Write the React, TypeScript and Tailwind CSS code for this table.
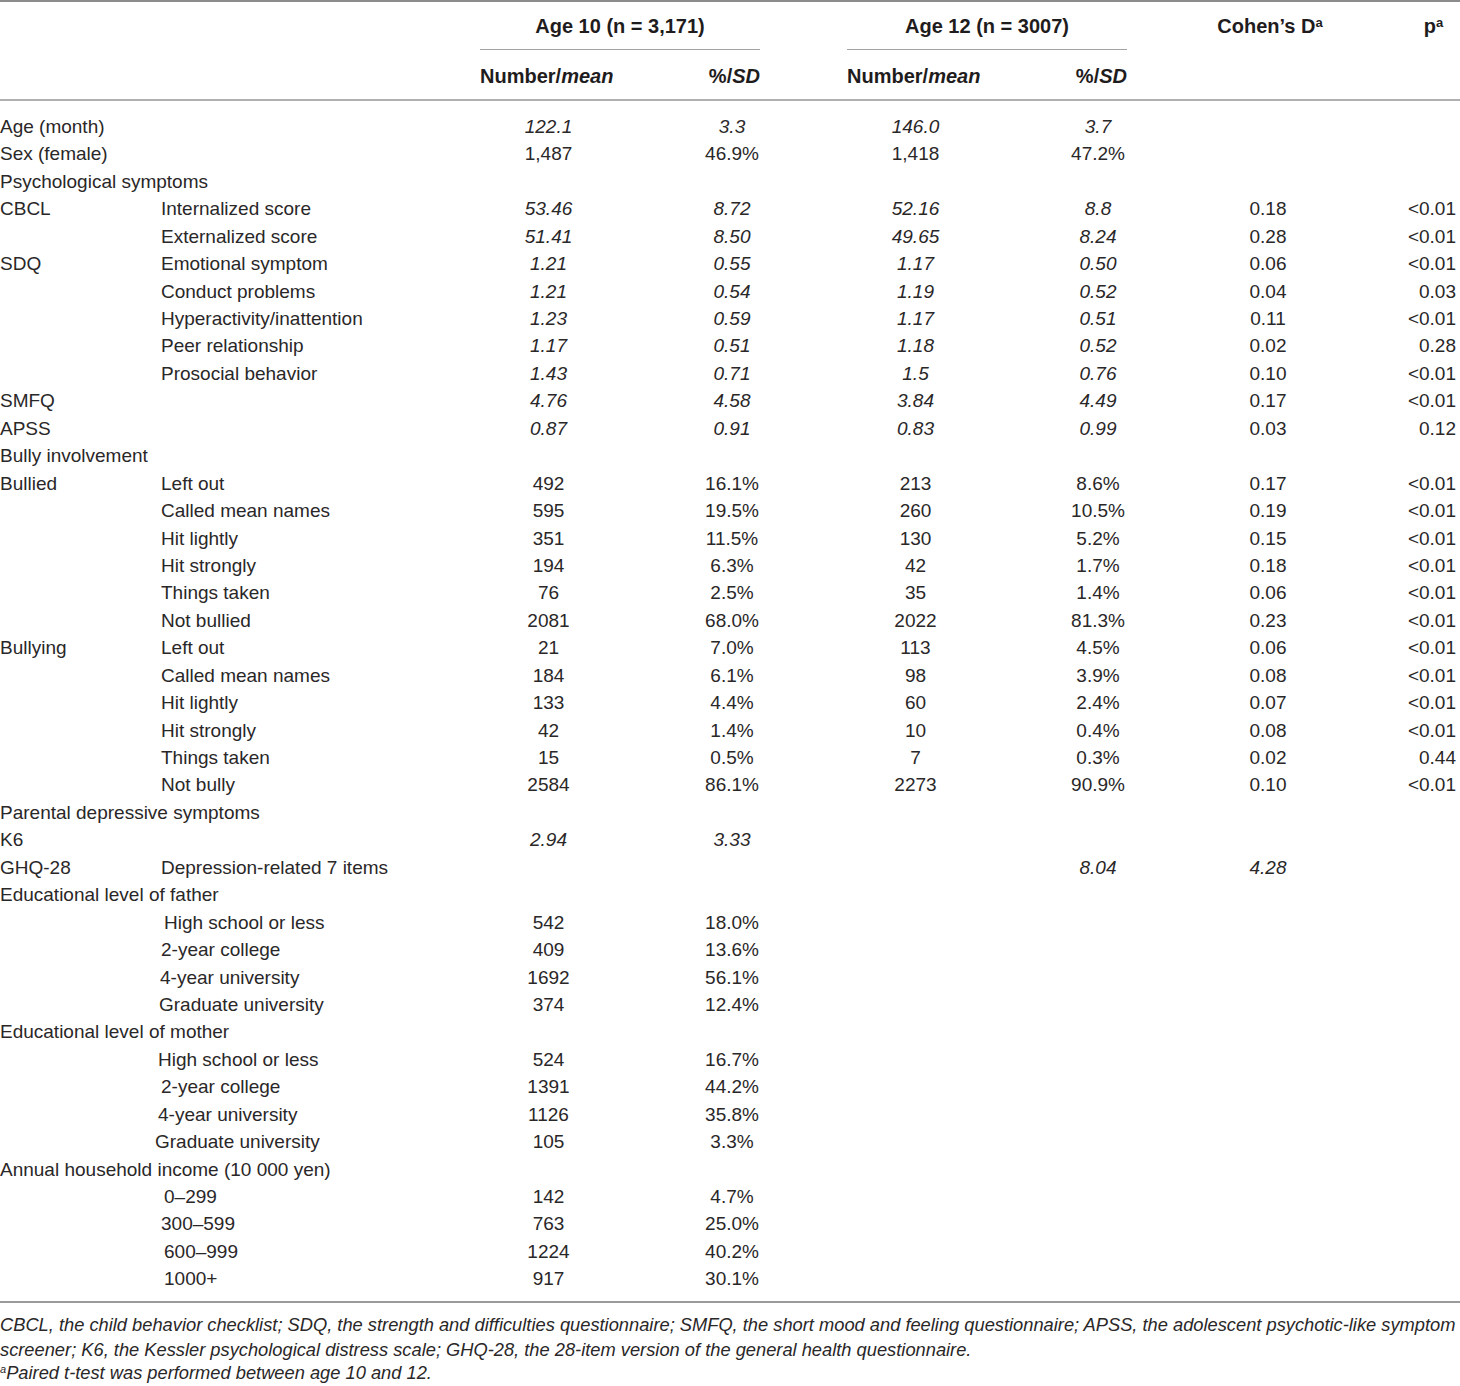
import { Fragment } from "react";

type Row = {
  a?: string;
  b?: string;
  bClass?: string;
  n10?: string;
  sd10?: string;
  n12?: string;
  sd12?: string;
  d?: string;
  p?: string;
  it?: boolean;
};

const rows: Row[] = [
  { a: "Age (month)", n10: "122.1", sd10: "3.3", n12: "146.0", sd12: "3.7", it: true },
  { a: "Sex (female)", n10: "1,487", sd10: "46.9%", n12: "1,418", sd12: "47.2%" },
  { a: "Psychological symptoms" },
  { a: "CBCL", b: "Internalized score", n10: "53.46", sd10: "8.72", n12: "52.16", sd12: "8.8", d: "0.18", p: "<0.01", it: true },
  { b: "Externalized score", n10: "51.41", sd10: "8.50", n12: "49.65", sd12: "8.24", d: "0.28", p: "<0.01", it: true },
  { a: "SDQ", b: "Emotional symptom", n10: "1.21", sd10: "0.55", n12: "1.17", sd12: "0.50", d: "0.06", p: "<0.01", it: true },
  { b: "Conduct problems", n10: "1.21", sd10: "0.54", n12: "1.19", sd12: "0.52", d: "0.04", p: "0.03", it: true },
  { b: "Hyperactivity/inattention", n10: "1.23", sd10: "0.59", n12: "1.17", sd12: "0.51", d: "0.11", p: "<0.01", it: true },
  { b: "Peer relationship", n10: "1.17", sd10: "0.51", n12: "1.18", sd12: "0.52", d: "0.02", p: "0.28", it: true },
  { b: "Prosocial behavior", n10: "1.43", sd10: "0.71", n12: "1.5", sd12: "0.76", d: "0.10", p: "<0.01", it: true },
  { a: "SMFQ", n10: "4.76", sd10: "4.58", n12: "3.84", sd12: "4.49", d: "0.17", p: "<0.01", it: true },
  { a: "APSS", n10: "0.87", sd10: "0.91", n12: "0.83", sd12: "0.99", d: "0.03", p: "0.12", it: true },
  { a: "Bully involvement" },
  { a: "Bullied", b: "Left out", n10: "492", sd10: "16.1%", n12: "213", sd12: "8.6%", d: "0.17", p: "<0.01" },
  { b: "Called mean names", n10: "595", sd10: "19.5%", n12: "260", sd12: "10.5%", d: "0.19", p: "<0.01" },
  { b: "Hit lightly", n10: "351", sd10: "11.5%", n12: "130", sd12: "5.2%", d: "0.15", p: "<0.01" },
  { b: "Hit strongly", n10: "194", sd10: "6.3%", n12: "42", sd12: "1.7%", d: "0.18", p: "<0.01" },
  { b: "Things taken", n10: "76", sd10: "2.5%", n12: "35", sd12: "1.4%", d: "0.06", p: "<0.01" },
  { b: "Not bullied", n10: "2081", sd10: "68.0%", n12: "2022", sd12: "81.3%", d: "0.23", p: "<0.01" },
  { a: "Bullying", b: "Left out", n10: "21", sd10: "7.0%", n12: "113", sd12: "4.5%", d: "0.06", p: "<0.01" },
  { b: "Called mean names", n10: "184", sd10: "6.1%", n12: "98", sd12: "3.9%", d: "0.08", p: "<0.01" },
  { b: "Hit lightly", n10: "133", sd10: "4.4%", n12: "60", sd12: "2.4%", d: "0.07", p: "<0.01" },
  { b: "Hit strongly", n10: "42", sd10: "1.4%", n12: "10", sd12: "0.4%", d: "0.08", p: "<0.01" },
  { b: "Things taken", n10: "15", sd10: "0.5%", n12: "7", sd12: "0.3%", d: "0.02", p: "0.44" },
  { b: "Not bully", n10: "2584", sd10: "86.1%", n12: "2273", sd12: "90.9%", d: "0.10", p: "<0.01" },
  { a: "Parental depressive symptoms" },
  { a: "K6", n10: "2.94", sd10: "3.33", it: true },
  // values sit one column to the right in the source table
  { a: "GHQ-28", b: "Depression-related 7 items", sd12: "8.04", d: "4.28", it: true },
  { a: "Educational level of father" },
  { b: "High school or less", bClass: "ml-[3px]", n10: "542", sd10: "18.0%" },
  { b: "2-year college", n10: "409", sd10: "13.6%" },
  { b: "4-year university", bClass: "-ml-[1px]", n10: "1692", sd10: "56.1%" },
  { b: "Graduate university", bClass: "-ml-[2px]", n10: "374", sd10: "12.4%" },
  { a: "Educational level of mother" },
  { b: "High school or less", bClass: "-ml-[3px]", n10: "524", sd10: "16.7%" },
  { b: "2-year college", n10: "1391", sd10: "44.2%" },
  { b: "4-year university", bClass: "-ml-[3px]", n10: "1126", sd10: "35.8%" },
  { b: "Graduate university", bClass: "-ml-[6px]", n10: "105", sd10: "3.3%" },
  { a: "Annual household income (10 000 yen)" },
  { b: "0–299", bClass: "ml-[3px]", n10: "142", sd10: "4.7%" },
  { b: "300–599", n10: "763", sd10: "25.0%" },
  { b: "600–999", bClass: "ml-[3px]", n10: "1224", sd10: "40.2%" },
  { b: "1000+", bClass: "ml-[3px]", n10: "917", sd10: "30.1%" },
];

const Sup = ({ children }: { children: string }) => (
  <sup className="relative -top-[3px] text-[13px] font-bold">{children}</sup>
);

export default function App() {
  return (
    <div className="w-[1460px] bg-white font-['Liberation_Sans',Arial,sans-serif] text-[#2a2728]">
      <div className="border-t-2 border-[#8c8c8c]" />

      {/* header */}
      <div className="grid grid-cols-[480px_280px_87px_280px_286px_1fr] text-[20px] font-bold leading-none text-[#1f1c1d]">
        <div className="h-[48px]" />
        <div className="flex h-[48px] items-center justify-center border-b border-[#a3a3a3]">
          Age 10 (n = 3,171)
        </div>
        <div />
        <div className="flex h-[48px] items-center justify-center border-b border-[#a3a3a3]">
          Age 12 (n = 3007)
        </div>
        <div className="flex h-[48px] items-center justify-center">
          Cohen’s D<Sup>a</Sup>
        </div>
        <div className="flex h-[48px] items-center justify-center pr-[6px]">
          p<Sup>a</Sup>
        </div>

        <div className="h-[49px]" />
        <div className="flex h-[49px] items-center justify-between pt-[2px]">
          <span>
            Number/<i>mean</i>
          </span>
          <span>
            %/<i>SD</i>
          </span>
        </div>
        <div />
        <div className="flex h-[49px] items-center justify-between pt-[2px]">
          <span>
            Number/<i>mean</i>
          </span>
          <span>
            %/<i>SD</i>
          </span>
        </div>
        <div />
        <div />
      </div>
      <div className="border-t-2 border-[#b0b0b0]" />

      {/* body */}
      <div className="grid grid-cols-[161px_319px_137px_230px_137px_228px_112px_1fr] pt-[12.5px] pb-[7.5px] text-[19px]">
        {rows.map((r, i) => {
          const num = r.it ? "italic" : "";
          return (
            <Fragment key={i}>
              <div className="flex h-[27.45px] items-center whitespace-nowrap">{r.a}</div>
              <div className="flex h-[27.45px] items-center whitespace-nowrap">
                <span className={r.bClass}>{r.b}</span>
              </div>
              <div className={`flex h-[27.45px] items-center justify-center ${num}`}>{r.n10}</div>
              <div className={`flex h-[27.45px] items-center justify-center ${num}`}>{r.sd10}</div>
              <div className={`flex h-[27.45px] items-center justify-center ${num}`}>{r.n12}</div>
              <div className={`flex h-[27.45px] items-center justify-center ${num}`}>{r.sd12}</div>
              <div className={`flex h-[27.45px] items-center justify-center ${r.a === "GHQ-28" ? "italic" : ""}`}>
                {r.d}
              </div>
              <div className="flex h-[27.45px] items-center justify-end pr-[4px]">{r.p}</div>
            </Fragment>
          );
        })}
      </div>
      <div className="border-t-2 border-[#9a9a9a]" />

      {/* notes */}
      <div className="pt-[9px] font-['Liberation_Sans_Narrow','Liberation_Sans',Arial,sans-serif] text-[18.3px] italic leading-[25px]">
        <p>
          CBCL, the child behavior checklist; SDQ, the strength and difficulties questionnaire; SMFQ, the
          short mood and feeling questionnaire; APSS, the adolescent psychotic-like symptom
          <br />
          screener; K6, the Kessler psychological distress scale; GHQ-28, the 28-item version of the
          general health questionnaire.
        </p>
        <p className="leading-[22px]">
          <sup className="text-[11px]">a</sup>Paired t-test was performed between age 10 and 12.
        </p>
      </div>
    </div>
  );
}
